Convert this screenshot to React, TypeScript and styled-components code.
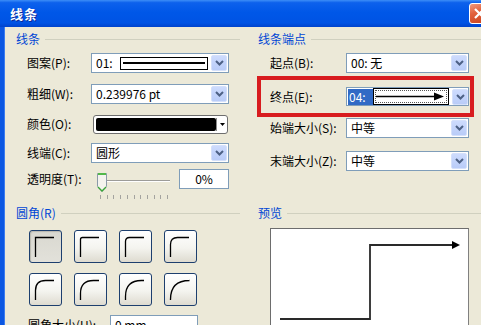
import React from "react";
import styled, { createGlobalStyle } from "styled-components";

const GlobalStyle = createGlobalStyle`
  html, body { margin: 0; padding: 0; }
  body {
    width: 481px;
    height: 325px;
    overflow: hidden;
    background: #ece9d8;
    font-family: "Noto Sans CJK SC", "Liberation Sans", sans-serif;
    font-size: 12px;
    color: #000;
  }
`;

const Window = styled.div`
  width: 481px;
  height: 325px;
  display: flex;
  flex-direction: column;
  overflow: hidden;
  background: #ece9d8;
`;

const TitleBar = styled.div`
  height: 27px;
  flex: none;
  display: flex;
  align-items: center;
  justify-content: space-between;
  padding-left: 10px;
  background: linear-gradient(
    180deg,
    #3d8ef7 0%,
    #0d61ec 10%,
    #0057e8 45%,
    #0053e4 85%,
    #0043cc 100%
  );
`;

const Title = styled.span`
  color: #fff;
  font-weight: bold;
  font-size: 13px;
  line-height: 13px;
  letter-spacing: 1px;
  text-shadow: 1px 1px 0 #0a2a9a;
`;

const CloseButton = styled.div`
  width: 21px;
  height: 21px;
  margin-right: -9px;
  box-sizing: border-box;
  border: 1px solid #fff;
  border-radius: 3px;
  background: linear-gradient(160deg, #f09a7e 0%, #e2623e 40%, #c8411b 100%);
  display: flex;
  align-items: center;
  justify-content: center;
`;

const Body = styled.div`
  flex: 1;
  display: grid;
  grid-template-columns: 224px 1fr;
  grid-template-rows: 174px 1fr;
  column-gap: 18px;
  padding: 6px 0 0 12px;
  border-left: 4px solid #0b57e2;
  box-shadow: inset 1px 0 0 #3b7cf0;
`;

const Section = styled.div`
  display: flex;
  flex-direction: column;
  min-width: 0;
`;

const Heading = styled.div`
  display: flex;
  align-items: center;
  gap: 5px;
  height: 12px;
  line-height: 12px;
  color: #0046d5;
  white-space: nowrap;
`;

const HeadingLine = styled.span`
  flex: 1;
  height: 1px;
  background: #d0d0bf;
`;

const Rows = styled.div<{ $pl: number }>`
  display: flex;
  flex-direction: column;
  padding-left: ${(p) => p.$pl}px;
`;

const FormRow = styled.div<{ $mt: number; $h?: number }>`
  position: relative;
  display: flex;
  align-items: center;
  height: ${(p) => p.$h ?? 20}px;
  margin-top: ${(p) => p.$mt}px;
`;

const Label = styled.span<{ $w: number }>`
  width: ${(p) => p.$w}px;
  flex: none;
  line-height: 12px;
  white-space: nowrap;
`;

const ComboBox = styled.div<{ $w: number; $h?: number }>`
  width: ${(p) => p.$w}px;
  height: ${(p) => p.$h ?? 20}px;
  flex: none;
  box-sizing: border-box;
  border: 1px solid #7f9db9;
  background: #fff;
  display: flex;
  align-items: center;
  padding: 0 1px 0 4px;
`;

const ComboText = styled.span`
  flex: 1;
  line-height: 14px;
  white-space: nowrap;
`;

const DropButton = styled.span`
  width: 16px;
  height: 16px;
  flex: none;
  box-sizing: border-box;
  border: 1px solid #d4e0fb;
  border-radius: 2px;
  background: linear-gradient(180deg, #cddbfd 0%, #b9ccf8 100%);
  display: flex;
  align-items: center;
  justify-content: center;
`;

const LineSample = styled.span`
  width: 88px;
  height: 13px;
  margin-left: auto;
  margin-right: 3px;
  box-sizing: border-box;
  border: 1px solid #000;
  display: flex;
  align-items: center;
  padding: 0 2px;
  &::after {
    content: "";
    flex: 1;
    height: 2px;
    background: #000;
  }
`;

const SelectedCode = styled.span`
  width: 25px;
  height: 16px;
  flex: none;
  box-sizing: border-box;
  background: #316ac5;
  color: #fff;
  line-height: 16px;
  padding-left: 1px;
`;

const ArrowSample = styled.span`
  width: 76px;
  height: 17px;
  flex: none;
  box-sizing: border-box;
  border: 1px solid #000;
  outline: 1px dotted #555;
  outline-offset: -3px;
  display: flex;
  align-items: center;
  margin-right: 3px;
`;

const ColorPicker = styled.div`
  width: 135px;
  height: 19px;
  margin-left: 2px;
  box-sizing: border-box;
  border: 1px solid #6e6e6e;
  border-radius: 3px;
  padding: 2px 0 2px 2px;
  display: flex;
  background: #fff;
`;

const Swatch = styled.span`
  flex: 1;
  background: #000;
  border-radius: 2px;
`;

const ColorArrow = styled.span`
  width: 10px;
  flex: none;
  border-left: 1px solid #8a8a8a;
  display: flex;
  align-items: center;
  justify-content: center;
`;

const SliderBox = styled.div`
  width: 80px;
  height: 31px;
  align-self: flex-start;
  margin-top: 3px;
  flex: none;
`;

const TextBox = styled.div<{ $w: number; $center?: boolean; $ml?: number }>`
  width: ${(p) => p.$w}px;
  height: 20px;
  box-sizing: border-box;
  border: 1px solid #7f9db9;
  background: #fff;
  line-height: 18px;
  text-align: ${(p) => (p.$center ? "center" : "left")};
  padding-left: ${(p) => (p.$center ? 0 : 4)}px;
  margin-left: ${(p) => p.$ml ?? 0}px;
  flex: none;
`;

const Highlight = styled.div`
  position: absolute;
  top: -11px;
  bottom: -11px;
  left: -13px;
  right: 7px;
  border: 4px solid #d81c1f;
  pointer-events: none;
`;

const CornerGrid = styled.div`
  display: grid;
  grid-template-columns: repeat(4, 33px);
  grid-auto-rows: 33px;
  gap: 10px 12px;
  margin-top: 11px;
  padding-left: 13px;
`;

const CornerButton = styled.div<{ $selected?: boolean }>`
  box-sizing: border-box;
  border: 1px solid #1d3f6e;
  border-radius: 3px;
  background: ${(p) =>
    p.$selected
      ? "linear-gradient(180deg, #d9d8d0 0%, #e2e1da 100%)"
      : "linear-gradient(180deg, #ffffff 0%, #f4f4ef 55%, #dedbd0 100%)"};
  box-shadow: ${(p) => (p.$selected ? "inset 1px 1px 1px #b8b7ae" : "none")};
  display: flex;
`;

const Preview = styled.div`
  width: 199px;
  height: 110px;
  margin: 9px 0 0 12px;
  box-sizing: border-box;
  border: 1px solid #808080;
  border-top-color: #6d6d6d;
  border-left-color: #6d6d6d;
  background: #fff;
`;

const Chevron = () => (
  <svg width="9" height="6" viewBox="0 0 9 6">
    <polyline points="1,1 4.5,4.5 8,1" fill="none" stroke="#4d6185" strokeWidth="2" />
  </svg>
);

const Combo = ({ w, children }: { w: number; children: React.ReactNode }) => (
  <ComboBox $w={w}>
    {children}
    <DropButton>
      <Chevron />
    </DropButton>
  </ComboBox>
);

const Slider = () => {
  const ticks = Array.from({ length: 11 }, (_, i) => 9 + i * 6.7);
  return (
    <SliderBox>
      <svg width="80" height="31" viewBox="0 0 80 31">
        <line x1="9" y1="8.5" x2="79" y2="8.5" stroke="#9d9c99" strokeWidth="1" />
        <line x1="9" y1="9.5" x2="79" y2="9.5" stroke="#ffffff" strokeWidth="1" />
        {ticks.map((x) => (
          <line key={x} x1={Math.round(x) + 0.5} y1="23" x2={Math.round(x) + 0.5} y2="27" stroke="#a4a39f" strokeWidth="1" />
        ))}
        <path d="M6.5 1.5 H15.5 V14.5 L11 19.5 L6.5 14.5 Z" fill="#f4f3ee" stroke="#8b9aa8" strokeWidth="1" />
        <path d="M7 2 H15" stroke="#52b84a" strokeWidth="2" />
        <path d="M7 15 L11 19 L15 15" fill="none" stroke="#3aa53a" strokeWidth="1.3" />
      </svg>
    </SliderBox>
  );
};

const radii = [0, 2, 4, 7, 10, 13, 16, 19];

const CornerIcon = ({ r }: { r: number }) => (
  <svg width="31" height="31" viewBox="0 0 31 31">
    <path
      d={r === 0 ? "M5.5 26 V6.5 H24" : `M5.5 26 V${6.5 + r} Q5.5 6.5 ${5.5 + r} 6.5 H24`}
      fill="none"
      stroke="#000"
      strokeWidth="1.3"
    />
  </svg>
);

export default function App() {
  return (
    <>
      <GlobalStyle />
      <Window>
        <TitleBar>
          <Title>线条</Title>
          <CloseButton>
            <svg width="13" height="13" viewBox="0 0 13 13">
              <path d="M2 2 L11 11 M11 2 L2 11" stroke="#fff" strokeWidth="2.2" />
            </svg>
          </CloseButton>
        </TitleBar>
        <Body>
          <Section>
            <Heading>
              线条
              <HeadingLine />
            </Heading>
            <Rows $pl={11}>
              <FormRow $mt={8}>
                <Label $w={64}>图案(P):</Label>
                <Combo w={138}>
                  <ComboText style={{ flex: "none" }}>01:</ComboText>
                  <LineSample />
                </Combo>
              </FormRow>
              <FormRow $mt={11}>
                <Label $w={64}>粗细(W):</Label>
                <Combo w={138}>
                  <ComboText>0.239976 pt</ComboText>
                </Combo>
              </FormRow>
              <FormRow $mt={10}>
                <Label $w={64}>颜色(O):</Label>
                <ColorPicker>
                  <Swatch />
                  <ColorArrow>
                    <svg width="5" height="3" viewBox="0 0 5 3">
                      <path d="M0 0 H5 L2.5 3 Z" fill="#000" />
                    </svg>
                  </ColorArrow>
                </ColorPicker>
              </FormRow>
              <FormRow $mt={9}>
                <Label $w={64}>线端(C):</Label>
                <Combo w={138}>
                  <ComboText>圆形</ComboText>
                </Combo>
              </FormRow>
              <FormRow $mt={6}>
                <Label $w={64}>透明度(T):</Label>
                <Slider />
                <TextBox $w={50} $center $ml={8}>
                  0%
                </TextBox>
              </FormRow>
            </Rows>
          </Section>

          <Section>
            <Heading>
              线条端点
              <HeadingLine />
            </Heading>
            <Rows $pl={12}>
              <FormRow $mt={8}>
                <Label $w={76}>起点(B):</Label>
                <Combo w={123}>
                  <ComboText>00: 无</ComboText>
                </Combo>
              </FormRow>
              <FormRow $mt={14} $h={19}>
                <Highlight />
                <Label $w={76}>终点(E):</Label>
                <ComboBox $w={123} $h={19} style={{ paddingLeft: 1 }}>
                  <SelectedCode>04:</SelectedCode>
                  <ArrowSample>
                    <svg width="74" height="15" viewBox="0 0 74 15">
                      <line x1="2" y1="7.5" x2="62" y2="7.5" stroke="#000" strokeWidth="1.6" />
                      <path d="M60 3.5 L70 7.5 L60 11.5 Z" fill="#000" />
                    </svg>
                  </ArrowSample>
                  <DropButton>
                    <Chevron />
                  </DropButton>
                </ComboBox>
              </FormRow>
              <FormRow $mt={12}>
                <Label $w={76}>始端大小(S):</Label>
                <Combo w={123}>
                  <ComboText>中等</ComboText>
                </Combo>
              </FormRow>
              <FormRow $mt={13}>
                <Label $w={76}>末端大小(Z):</Label>
                <Combo w={123}>
                  <ComboText>中等</ComboText>
                </Combo>
              </FormRow>
            </Rows>
          </Section>

          <Section>
            <Heading>
              圆角(R)
              <HeadingLine />
            </Heading>
            <CornerGrid>
              {radii.map((r, i) => (
                <CornerButton key={r} $selected={i === 0}>
                  <CornerIcon r={r} />
                </CornerButton>
              ))}
            </CornerGrid>
            <Rows $pl={12}>
              <FormRow $mt={9}>
                <Label $w={82}>圆角大小(U):</Label>
                <TextBox $w={88}>0 mm</TextBox>
              </FormRow>
            </Rows>
          </Section>

          <Section>
            <Heading>
              预览
              <HeadingLine />
            </Heading>
            <Preview>
              <svg width="197" height="108" viewBox="0 0 197 108">
                <polyline points="9,90 99,90 99,16 182,16" fill="none" stroke="#2a2a2a" strokeWidth="1.8" />
                <path d="M181 12 L189 16 L181 20 Z" fill="#000" />
              </svg>
            </Preview>
          </Section>
        </Body>
      </Window>
    </>
  );
}
